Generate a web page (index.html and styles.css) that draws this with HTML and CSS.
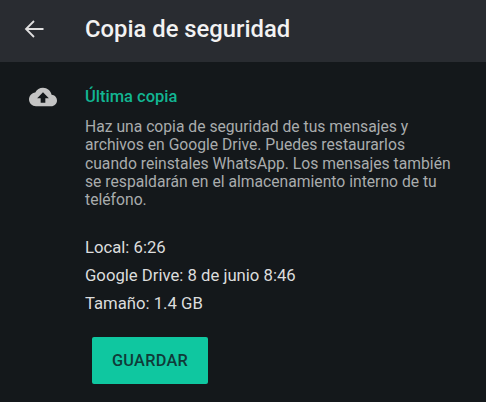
FILE: index.html
```html
<!DOCTYPE html>
<html lang="es">
  <head>
    <meta charset="UTF-8" />
    <meta name="viewport" content="width=device-width, initial-scale=1.0" />
    <title>Copia de seguridad</title>
    <link rel="stylesheet" href="styles.css">
  </head>
  <body>
    <header class="toolbar">
      <svg class="back-icon" viewBox="0 0 20 18" width="20" height="18" aria-hidden="true">
        <path d="M19.5 9H2M10 1 2 9l8 8" fill="none" stroke="#e0e0e0" stroke-width="1.8" />
      </svg>
      <h1 class="toolbar-title">Copia de seguridad</h1>
    </header>
    <main class="backup">
      <svg class="cloud-icon" viewBox="0 0 24 24" width="28" height="28" aria-hidden="true">
        <path fill="#c4c4c4" d="M19.35 10.04C18.67 6.59 15.64 4 12 4 9.11 4 6.6 5.64 5.35 8.04 2.34 8.36 0 10.91 0 14c0 3.31 2.69 6 6 6h13c2.76 0 5-2.24 5-5 0-2.64-2.05-4.78-4.65-4.96zM14 13v4h-4v-4H7l5-5 5 5h-3z" />
      </svg>
      <section class="backup-body">
        <h2 class="backup-title">Última copia</h2>
        <p class="backup-text">Haz una copia de seguridad de tus mensajes y archivos en Google Drive. Puedes restaurarlos cuando reinstales WhatsApp. Los mensajes también se respaldarán en el almacenamiento interno de tu teléfono.</p>
        <ul class="backup-info">
          <li>Local: 6:26</li>
          <li>Google Drive: 8 de junio 8:46</li>
          <li>Tamaño: 1.4 GB</li>
        </ul>
        <button class="save-button">GUARDAR</button>
      </section>
    </main>
  </body>
</html>
```

FILE: styles.css
```css
html,
body {
  margin: 0;
  height: 100%;
}

body {
  background-color: #14181b;
  font-family: Roboto, "Liberation Sans", sans-serif;
  overflow: hidden;
}

.toolbar {
  height: 62px;
  display: flex;
  align-items: center;
  background-color: #292c31;
}

.back-icon {
  margin-left: 24px;
  margin-bottom: 4px;
}

.toolbar-title {
  margin: 0 0 4px 41px;
  font-size: 23.8px;
  font-weight: 500;
  color: #f2f2f2;
}

.backup {
  display: flex;
  align-items: flex-start;
  padding-top: 21px;
}

.cloud-icon {
  margin-left: 29px;
  flex-shrink: 0;
}

.backup-body {
  margin-left: 28px;
  width: 370px;
}

.backup-title {
  margin: 4px 0 0;
  font-size: 16.5px;
  line-height: 19px;
  font-weight: 500;
  color: #12b592;
}

.backup-text {
  margin: 12px 0 0;
  font-size: 15.7px;
  line-height: 18.25px;
  color: #a9acad;
}

.backup-info {
  list-style: none;
  margin: 25px 0 0;
  padding: 0;
  font-size: 16.7px;
  line-height: 28px;
  color: #dcdddd;
}

.save-button {
  display: block;
  margin: 19px 0 0 7px;
  width: 116px;
  height: 47px;
  padding: 0;
  border: 0;
  border-radius: 2px;
  background-color: #0fc7a0;
  font-family: inherit;
  font-size: 16.3px;
  letter-spacing: 0.3px;
  font-weight: 500;
  color: #0f3a38;
}
```
